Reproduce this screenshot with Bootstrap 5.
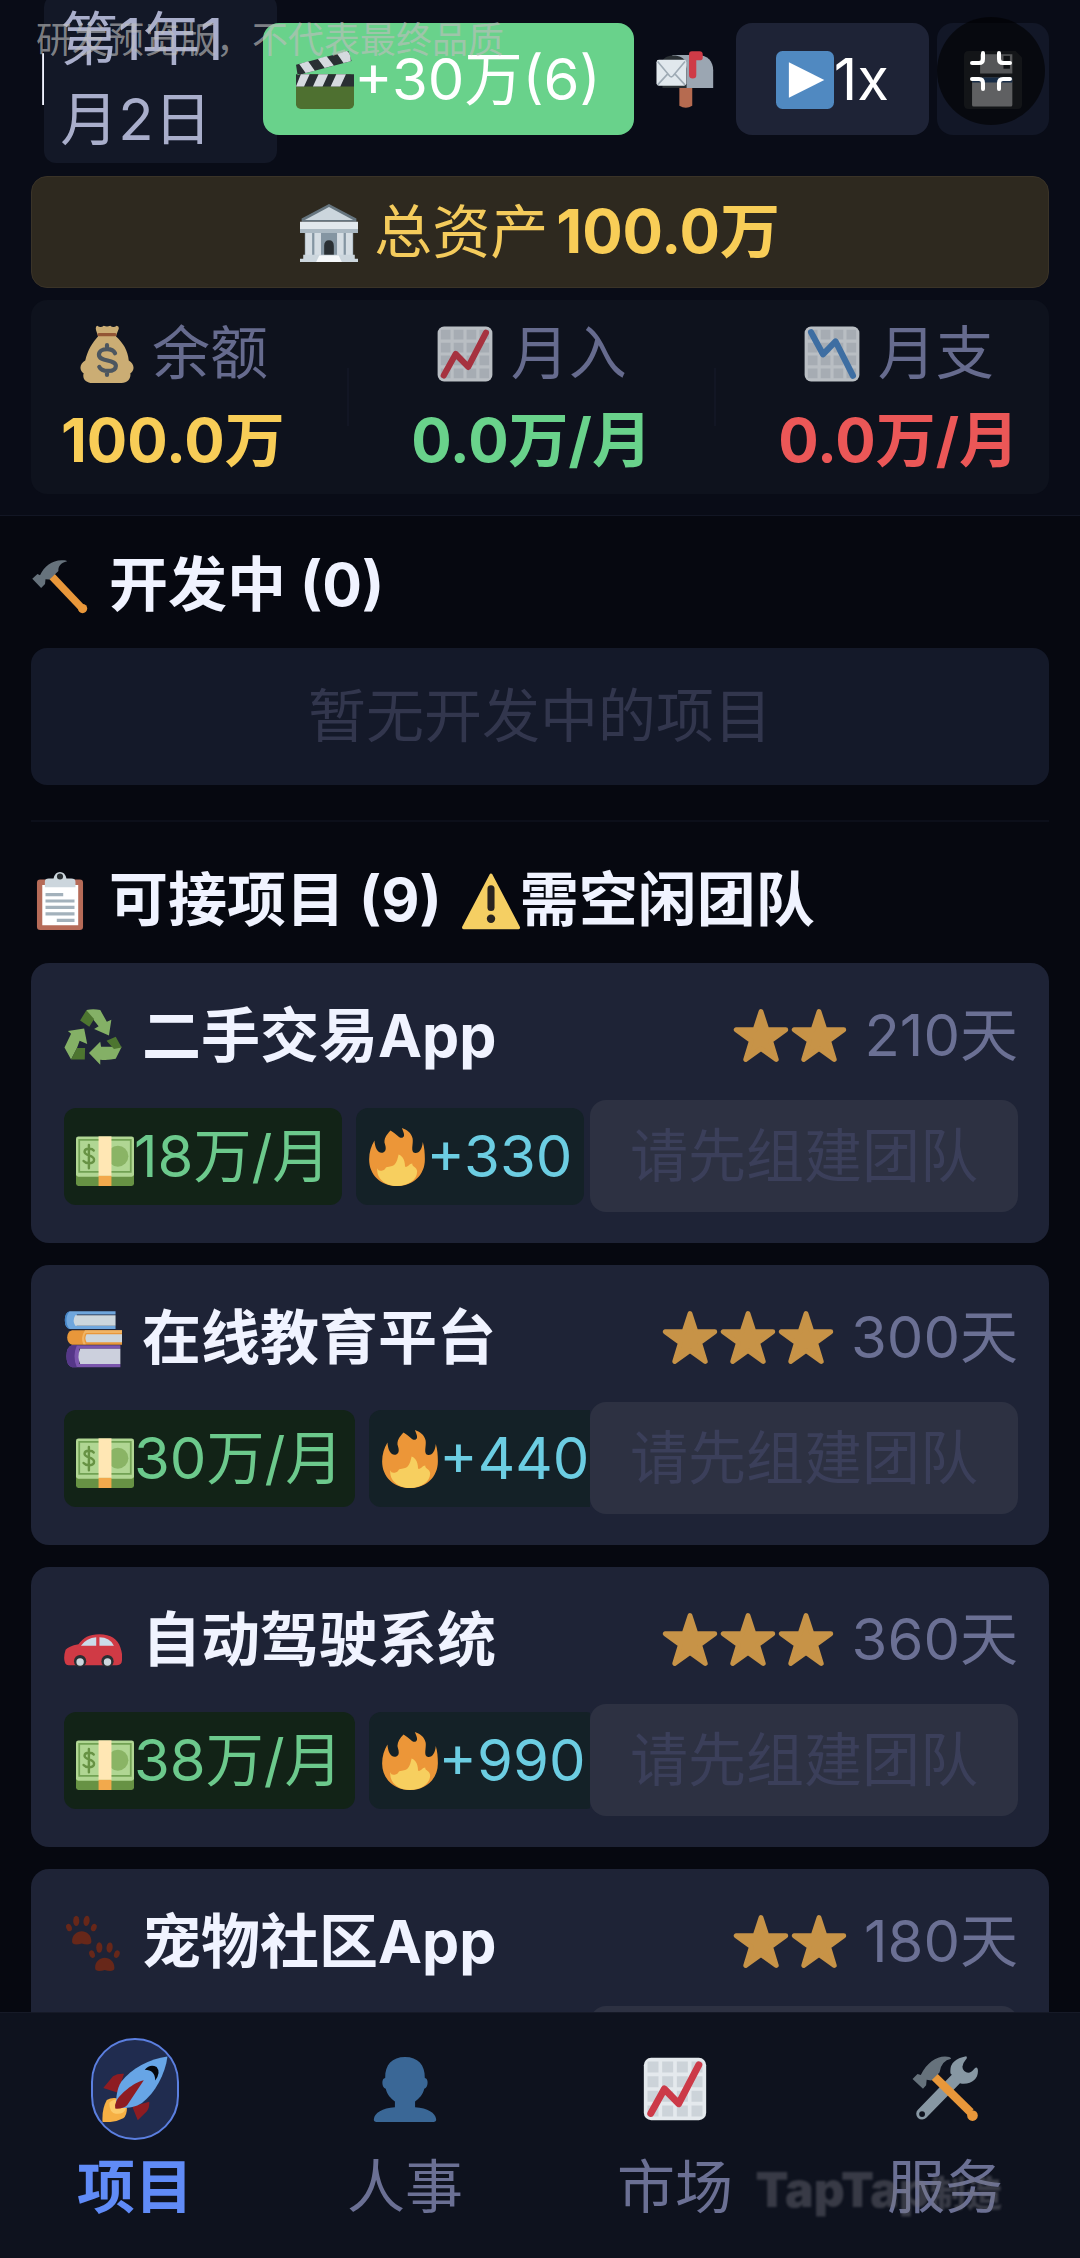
<!DOCTYPE html>
<html lang="zh-CN">
<head>
  <meta charset="UTF-8">
  <title>项目</title>
  <meta name="viewport" content="width=device-width, initial-scale=1">
  <link href="https://cdn.jsdelivr.net/npm/bootstrap@5.3.2/dist/css/bootstrap.min.css" rel="stylesheet">

  <style>
    body {
      background: #060810;
      color: #f0f3ff;
      font-family: Inter, "Noto Sans CJK SC", sans-serif;
      font-size: 58px;
      line-height: 87px;
      white-space: nowrap;
    }

    .emo {
      width: 58px;
      height: 58px;
      vertical-align: -9px;
      flex-shrink: 0;
    }

    /* top area */
    .top-area {
      background: #090c17;
      border-bottom: 1px solid #121624;
      padding: 23px 31px 21px;
    }

    .top-row {
      height: 112px;
      margin-bottom: 41px;
      gap: 8px;
    }

    .top-left {
      min-width: 0;
      margin-right: -22px;
      padding-left: 3px;
    }

    .game-title {
      flex: 1 1 0;
      min-width: 0;
      overflow: hidden;
      font-weight: 700;
    }

    .date-box {
      flex: 0 0 233px;
      padding: 4px 16px;
      border-radius: 12px;
      background: #131827;
      color: #a9aecb;
      line-height: 80px;
      white-space: normal;
    }

    .btn-game {
      --bs-btn-font-size: 58px;
      --bs-btn-line-height: 1.5;
      --bs-btn-border-width: 0;
      --bs-btn-border-radius: 16px;
      --bs-btn-disabled-opacity: 1;
      --bs-btn-padding-y: 0;
      --bs-btn-padding-x: 40px;
      flex-shrink: 0;
      height: 112px;
    }

    .btn-ad {
      --bs-btn-color: #fff;
      --bs-btn-bg: #69d28b;
      --bs-btn-padding-x: 33px;
      z-index: 1;
    }

    .btn-mail {
      --bs-btn-padding-x: 14px;
    }

    .btn-speed {
      --bs-btn-color: #fff;
      --bs-btn-bg: #1e2336;
    }

    .btn-save {
      --bs-btn-bg: #121727;
      --bs-btn-padding-x: 27px;
    }

    .btn-shrink {
      position: absolute;
      top: 17px;
      right: 35px;
      z-index: 3;
      width: 108px;
      height: 108px;
      border: 0;
      border-radius: 50%;
      background: rgba(0, 0, 0, .6);
    }

    .preview-note {
      position: absolute;
      top: 16px;
      left: 36px;
      z-index: 2;
      color: rgba(190, 190, 190, .65);
      font-size: 36px;
      line-height: 48px;
    }

    .asset-bar {
      padding: 11px 0;
      border: 1px solid #3a3327;
      border-radius: 16px;
      background: #2e291f;
      color: #f4cb5c;
    }

    .asset-bar b,
    .stat-value {
      font-size: 60px;
      font-weight: 700;
    }

    .stat-box {
      margin-top: 12px;
      padding: 10px 30px;
      border-radius: 16px;
      background: #0e121d;
    }

    .stat-name {
      color: #666b8e;
    }

    .stat-name .emo {
      opacity: .8;
    }

    .stat-line {
      width: 2px;
      height: 58px;
      background: #121624;
    }

    .c-gold { color: #f8cd57; }
    .c-green { color: #69d28b; }
    .c-red { color: #eb5757; }

    /* list area */
    .list-area {
      min-height: 0;
      overflow: hidden;
      padding: 25px 31px 0;
    }

    .list-head {
      margin: 0 0 20px;
      font-size: 59px;
      font-weight: 700;
      line-height: 87px;
    }

    .list-head .emo:first-child,
    .project-name .emo {
      margin-right: 6px;
    }

    .list-head .emo + .emo {
      margin-left: 6px;
    }

    .empty-box {
      padding: 25px 0;
      border-radius: 16px;
      background: #141929;
      color: #32364d;
    }

    .list-line {
      margin: 35px 0 34px;
      border-top: 2px solid #0c0f1a;
      opacity: 1;
    }

    .project {
      margin-bottom: 22px;
      padding: 29px 31px 31px 33px;
      border-radius: 18px;
      background: #1e2336;
    }

    .project-name {
      margin: 0;
      font-size: 59px;
      font-weight: 700;
      line-height: 87px;
    }

    .project-days {
      color: #6b7094;
    }

    .project-foot {
      height: 112px;
      margin-top: 21px;
    }

    .chips {
      min-width: 0;
      gap: 14px;
      overflow: hidden;
    }

    .chip {
      flex-shrink: 0;
      padding: 5px 12px;
      border-radius: 12px;
      background: #122317;
      color: #6cc98c;
    }

    .chip-hot {
      background: #142127;
      color: #6ccde2;
    }

    .btn-team {
      --bs-btn-disabled-color: #3b3f5a;
      --bs-btn-disabled-bg: #2d3142;
    }

    /* bottom tabs */
    .tabs {
      position: relative;
      padding: 25px 0 28px;
      border-top: 1px solid #161a27;
      background: #0e121e;
    }

    .tab {
      color: #6b7094;
      line-height: 86px;
      text-decoration: none;
    }

    .tab .tab-icon {
      width: 88px;
      height: 102px;
      margin-bottom: 4px;
      border: 2px solid transparent;
      border-radius: 44px;
    }

    .tab .emo {
      width: 66px;
      height: 66px;
    }

    .tab.active {
      color: #608bf7;
      font-weight: 700;
    }

    .tab.active .tab-icon {
      border-color: #5b7fe0;
      background: #202c4f;
    }

    .brand-mark {
      position: absolute;
      right: 78px;
      bottom: 32px;
      color: rgba(120, 120, 130, .4);
      font-size: 48px;
      font-weight: 900;
      line-height: 64px;
      filter: blur(1px);
      pointer-events: none;
    }

    .brand-mark small {
      font-size: 36px;
    }
  </style>
</head>

<body>
  <!-- icons -->
  <svg class="d-none" xmlns="http://www.w3.org/2000/svg">
    <symbol id="clapper" viewBox="0 0 36 36">
      <rect y="14.5" width="36" height="21.500" rx="3" fill="#4e7030"/>
      <path fill="#292f33" d="M0 14.500h36V22H0zM0 8.500 1 15 34.500 6.200 32.500 0Z"/>
      <path fill="#d5dadf" d="M3 14.500h5.500L5 22H0zM14 14.500h6L16.500 22h-6zM25 14.500h6L27.500 22h-6zM2 8.100l5.500-1.700 4.200 5.800-5.700 1.500zM13.500 4.800l5.500-1.500L23.500 9l-5.700 1.500zM25.500 1.700 31.500 0c1.500.5 2.500 3 2.500 6.300l-4.500 1.200z"/>
    </symbol>
    <symbol id="mail" viewBox="0 0 36 36">
      <path fill="#b66b50" d="M14.500 22h8v12q-4 2.500-8 0z"/>
      <path fill="#9ba6b2" d="M10 2.500h16c6 0 9.500 4 9.500 9.500v11h-17z"/>
      <path fill="#292f33" d="M4 6c2-4 11-4.500 14 0l1 5v12H4z"/>
      <rect x=".3" y="5.500" width="18.500" height="16" rx="1.500" fill="#e1e8ed"/>
      <path fill="none" stroke="#9eaab4" stroke-width="1" d="M1 6.500l7.500 9q1 1 2 0l7.500-9M1 21l6-6.500M18 21l-6-6.500"/>
      <path fill="#cf3b47" d="M20.500 2q0-1.800 1.800-1.800H27q2 0 2 2v2q0 1.600-2 1.600h-2V15q0 2-2.200 2t-2.300-2z"/>
    </symbol>
    <symbol id="play" viewBox="0 0 36 36">
      <rect width="36" height="36" rx="4" fill="#5089c1"/>
      <path fill="#fff" d="M8 7v22l22-11z"/>
    </symbol>
    <symbol id="floppy" viewBox="0 0 36 36">
      <path fill="#31363c" d="M3 0h29l4 4v29q0 3-3 3H3q-3 0-3-3V3q0-3 3-3z"/>
      <path fill="#d4d8dc" d="M10 2h20v12H10z"/>
      <path fill="#292f33" d="M24.500 3h4v8h-4z"/>
      <rect x="5" y="16.500" width="25" height="18" rx="1" fill="#eef1f4"/>
      <path fill="#3b6fae" d="M5 16.500h25v3H5z"/>
    </symbol>
    <symbol id="bank" viewBox="0 0 36 36">
      <path fill="#66757f" d="M18 0 35 9v2H1V9z"/>
      <path fill="#ccd6dd" d="M18 1.800 33 10H3z"/>
      <path fill="#e1e8ed" d="M0 11h36v6.500H0z"/>
      <path fill="#aab8c2" d="M0 15.500h36v2.500H0zM3 18h30v15H3z"/>
      <path fill="#8495a2" d="M7.500 18H9v14H7.500zM13 18h10v15H13zM27 18h1.500v14H27z"/>
      <path fill="#d5dde3" d="M3.500 18h4v14h-4zM9 18h4v14H9zM23 18h4v14h-4zM28.500 18h4v14h-4z"/>
      <path fill="#292f33" d="M15 32v-6q0-3.500 3-3.500t3 3.500v6z"/>
      <path fill="#ccd6dd" d="M2 31.500h32V34h2v2H0v-2h2z"/>
      <path fill="#f5f8fa" d="M12 32h12l2 4H10z"/>
    </symbol>
    <symbol id="bag" viewBox="0 0 36 36">
      <path fill="#fbd48a" d="M12 .5q2 1.500 4 0 2 1 4 0 2 1.500 4 0 2.200.6.800 3L23.500 7C28 11 31 16 31.500 22c3.500 2 4 6 1 8 .5 3-1.500 6-5.500 6H9c-4 0-6.500-2.500-5.500-6-3-2-2.500-6 1-8C6 15.500 9 11 12.500 7L11.300 3.500Q10.500 1 12 .5Z"/>
      <path stroke="#b5683c" stroke-width="2" stroke-linecap="round" d="M13 6h10"/>
      <path fill="none" stroke="#5c6770" stroke-width="2.600" stroke-linecap="round" d="M18 12.500v2.500M18 28.500V31M23 17.500c-1-2-3-2.500-5-2.500-3 0-5 1.300-5 3.400 0 4.600 10.500 2.600 10.500 7 0 2-2 3.100-5 3.100-2.500 0-4.500-.8-5.300-2.500"/>
    </symbol>
    <symbol id="grid" viewBox="0 0 36 36">
      <rect x="1" y="1" width="34" height="34" rx="4" fill="#e4e9ed"/>
      <path fill="#ccd3d9" d="M3 3h6v6H3zM11 3h6v6h-6zM19 3h6v6h-6zM27 3h6v6h-6zM3 11h6v6H3zM11 11h6v6h-6zM19 11h6v6h-6zM27 11h6v6h-6zM3 19h6v6H3zM11 19h6v6h-6zM19 19h6v6h-6zM27 19h6v6h-6zM3 27h6v6H3zM11 27h6v6h-6zM19 27h6v6h-6zM27 27h6v6h-6z"/>
    </symbol>
    <symbol id="chart-up" viewBox="0 0 36 36">
      <use href="#grid"/>
      <path fill="none" stroke="#cc3a48" stroke-width="3.800" stroke-linecap="round" stroke-linejoin="round" d="M4.800 31.300 12.200 18l7.800 8L31 4.800"/>
    </symbol>
    <symbol id="chart-down" viewBox="0 0 36 36">
      <use href="#grid"/>
      <path fill="none" stroke="#4a86c4" stroke-width="3.800" stroke-linecap="round" stroke-linejoin="round" d="M5 4.500l7.400 13.700 7.800-8L31 31.500"/>
    </symbol>
    <symbol id="hammer" viewBox="0 0 36 36">
      <path stroke="#e8973a" stroke-width="4.600" d="M11.500 10.500 31 31"/>
      <circle cx="32" cy="32" r="2.900" fill="#e8973a"/>
      <path fill="#66727c" d="M.800 13.500 4 10.500l1.600.8C8 6 13 2 19 2c2.500 0 3.400.3 3.400.7-4 1-5.600 3.300-5.400 6L11.500 14 9 13.800l-.3 3L6.300 19.200Z"/>
    </symbol>
    <symbol id="clipboard" viewBox="0 0 36 36">
      <rect x="3.700" y="4.600" width="28.600" height="31.400" rx="2" fill="#b66b58"/>
      <path fill="#fff" d="M7 8h22.300v25H7z"/>
      <path fill="#ccd6dd" d="M8.600 9.500V6q0-2 2.400-2h3q1-4 4-4t4 4h3q2.600 0 2.600 2v3.500z"/>
      <circle cx="18" cy="2.800" r="1.900" fill="#292f33"/>
      <path stroke="#a3b1bb" stroke-width="2" d="M9 14h11M9 18h18M9 22h18M9 26h18M16 30h11"/>
    </symbol>
    <symbol id="warn" viewBox="0 0 36 36">
      <path fill="#f5cf63" stroke="#f5cf63" stroke-width="2" stroke-linejoin="round" d="M18 2 35 34.500H1z"/>
      <path stroke="#292420" stroke-width="4.400" stroke-linecap="round" d="M18 10.500V22"/>
      <circle cx="18" cy="29" r="2.600" fill="#292420"/>
    </symbol>
    <symbol id="recycle" viewBox="0 0 36 36">
      <path fill="#84b066" d="M14 1.200q4-.8 8.500 0L26.600 8.600l2.800-1.300-1.500 9.700-9.200-4 2.800-1.700L14 2zM12.500 12.700 2.400 14.300l2 1.700-4.100 8.500L4.400 32l3.600-7 1.700-4.600 4.700 2zM15.500 27.900l7-6.900.5 3h12.800l-3.700 7.500q-4 1-9.600.6v3.100z"/>
      <path fill="#4d7530" d="M13.900 1.400 10 7.700l5.700 4 3-4.800zM8 24.900h5.100l-.2 7.100H4.400zM26.400 20.400l5.700-2.600 3.700 6.700-4.800 1z"/>
    </symbol>
    <symbol id="books" viewBox="0 0 36 36">
      <path fill="#6fa6dd" d="M3.500.8H32v2H8v7h24v2H3.500q-3-1-3-5.500t3-5.500z"/>
      <path fill="#4382c4" d="M3.500.8Q1.500 3 1.500 6.300t2 5.500Q.5 11 .5 6.300T3.500.8z"/>
      <path fill="#ccd6dd" d="M7 3.300h25v6.500H7q-2-3 0-6.500z"/>
      <path fill="#e8973a" d="M5 12.500h31v9H5q-3-1-3-4.500t3-4.500z"/>
      <path fill="#ccd6dd" d="M14 15h22v5H14q-1.500-2.500 0-5z"/>
      <path fill="#f0b464" d="M13 12.500h23v1.700H13.500q-2 2.800 0 7H12q-2-4 1-8.700z"/>
      <path fill="#7b56ad" d="M5 21.900h30V24H9.500v9.500H35v2H5q-3.500-1-3.500-6.800T5 21.900z"/>
      <path fill="#553788" d="M5 21.900h3q-3 7 0 13.600H5q-3.500-1-3.500-6.800T5 21.900z"/>
      <path fill="#ccd0dd" d="M10 24h25v9.500H10q-2-4.500 0-9.500z"/>
    </symbol>
    <symbol id="car" viewBox="0 0 36 36">
      <path fill="#d03a45" d="M.5 31q-1-3 .5-7.500 1.500-2.300 8-3.500c3-4 6.500-6.200 13-6.200 7 0 11.500 3.200 13 8.200q1.800 5 .7 9.500-.7 1.500-3 1.500H3q-2 0-2.500-2z"/>
      <path fill="#cbdcea" d="M10.500 21q3.500-5 9.500-5.300V21zM22 15.700q6.500 0 9 5.300h-9z"/>
      <circle cx="10" cy="30.500" r="3.800" fill="#292f33"/>
      <circle cx="27" cy="30.500" r="3.800" fill="#292f33"/>
      <circle cx="10" cy="31" r="2.300" fill="#ccd6dd"/>
      <circle cx="27" cy="31" r="2.300" fill="#ccd6dd"/>
    </symbol>
    <symbol id="paws" viewBox="0 0 36 36">
      <g id="paw" fill="#672719">
        <path d="M5 17c0-4 3-6.300 6-6.300s6 2.300 6 6.300c0 2.500-3.500 2-6 1.300-2.500.7-6 1.200-6-1.300z"/>
        <ellipse cx="3.100" cy="8.400" rx="1.700" ry="2.400" transform="rotate(-20 3.100 8.400)"/>
        <ellipse cx="7.600" cy="4.300" rx="1.900" ry="3.200"/>
        <ellipse cx="14" cy="4.300" rx="1.900" ry="3.200" transform="rotate(8 14 4.300)"/>
        <ellipse cx="18.500" cy="8.400" rx="1.700" ry="2.400" transform="rotate(20 18.500 8.400)"/>
      </g>
      <use href="#paw" x="14.300" y="16.500"/>
    </symbol>
    <symbol id="star" viewBox="0 0 36 36">
      <path fill="#c79347" stroke="#c79347" stroke-width="3" stroke-linejoin="round" d="M18 2.800l3.700 11.300h11.700L24 21l3.500 11.600L18 25.800l-9.500 6.800L12 21 2.600 14.100h11.700z"/>
    </symbol>
    <symbol id="cash" viewBox="0 0 36 36">
      <rect y="22" width="36" height="14" rx="1.500" fill="#679244"/>
      <rect y="5.200" width="36" height="25" rx="1.500" fill="#b0d693"/>
      <path fill="none" stroke="#72a254" stroke-width="1.100" d="M2 7.300h32v20H2z"/>
      <circle cx="26" cy="17.500" r="6.500" fill="#8ab465"/>
      <path fill="none" stroke="#679244" stroke-width="1.500" stroke-linecap="round" d="M8 10.500v14.500M11 14c-1-1.400-5.500-1.700-5.700.7-.2 2.700 5.900 2 5.900 5 0 2.800-5 2.700-6.500.8"/>
      <path fill="#ffe7b4" d="M14 5.200h8v24.500h-8z"/>
      <path fill="#f2a94c" d="M14 29.700h8V36h-8z"/>
    </symbol>
    <symbol id="fire" viewBox="0 0 36 36">
      <path fill="#ec9638" d="M4 7.700C2 11 .7 15 .7 19.500.7 29 8 36 18 36s17.300-7 17.300-16.500c0-4-.3-7.500-1.300-10.800-.3 4-2 7-4.700 6.800-3.300-.4-1-5.500-1.600-9C27 3 24 1 21 0c.8 2 2.500 5.300.3 6-2.300.4-3-2-7.300-4.500C11.500 4 9.500 7 10.500 10c.8 2.500.8 4.500-1 5.200-3.500 1-5.200-3.200-5.500-7.500Z"/>
      <path fill="#f7cf5f" d="M5.800 25q.5 2 2.700 1.500c3-.5 1.500-2.500 4.500-2.500 4 0 5-3 6-7.500 3 1 4 4.500 4 7.500 2 .5 2.500-2 4.500-2-.5 2 3 2 3 5 0 5-5.500 9-12.500 9S5 31.500 5.800 25Z"/>
    </symbol>
    <symbol id="rocket" viewBox="0 0 36 36">
      <path fill="#8e1c22" d="M12 9.700Q8.500 9.500 6 11L.7 17.500l8 2.500zM25.800 25q.2 3-1.300 5.200L19.500 35l-3-7.500z"/>
      <path fill="#f6b044" d="M.3 36q-.5-7 2.300-12Q5 22.500 8 23l5.600 5.300q0 4-2 5.700Q7 36.500.3 36z"/>
      <path fill="#fccb6a" d="M4 25.500q3-2.500 5-1.500l4 4.500q-1 3.500-5.500 3Q4 31 4 25.500z"/>
      <path fill="#67a5e6" d="M35.700.3C26 1.500 16 7 10.500 14 8 18 7.500 23 7.800 28.300c5 .3 10 0 14-2.600C29 20 34.500 10 35.700.3Z"/>
      <path fill="#8e1c22" d="M22.800 13.200C17 14.500 9.500 21 7.800 24.700q-1 2-.6 4 4.300.3 6.600-2z"/>
      <path fill="#05070c" d="M23.300 7.500q3-3.500 6.500-1.500 2.500 3-.8 7.300Q29 7.500 23.300 7.500z"/>
    </symbol>
    <symbol id="person" viewBox="0 0 36 36">
      <path fill="#3a6796" d="M18 .5c7 0 11 4.200 10.800 11.500 2.200 0 2 5.500-.3 5.800-.7 3.200-2.700 5.200-5 7V28c7 .5 11 3 11.500 6.500.1 1-.5 1.500-1.500 1.500H2.500c-1 0-1.600-.5-1.500-1.500C1.500 31 5.500 28.500 12.500 28v-3.200c-2.300-1.800-4.300-3.800-5-7-2.300-.3-2.500-5.800-.3-5.800C7 4.700 11 .5 18 .5Z"/>
    </symbol>
    <symbol id="tools" viewBox="0 0 36 36">
      <path stroke="#8797a3" stroke-width="6.400" stroke-linecap="round" d="M5.500 31.500 24 12.500"/>
      <circle cx="5.500" cy="31.700" r="1.600" fill="#0e121e"/>
      <path fill="#8797a3" d="M29.500.2q1 .7-.3 2-3 3.500-.7 6 2.700 2.300 5.500-1.200 1.500-1.500 1.900.3C36.500 12 33 15.800 26.500 15L21 9.500Q20 2 29.500.2Z"/>
      <path stroke="#e8973a" stroke-width="4.600" d="M12 11l20 19.700"/>
      <circle cx="33" cy="32.500" r="2.900" fill="#e8973a"/>
      <path fill="#66727c" d="M.3 12.500 3 9.800l1.800.5C8 4 13 .3 18 .3q3 0 3.400 1.200-5.500 1-6.400 7.500L10.500 13.300 8 13l-.3 3L6 17.800Z"/>
    </symbol>
  </svg>

  <div class="vh-100 d-flex flex-column position-relative overflow-hidden">
    <header class="top-area">
      <div class="top-row d-flex align-items-center">
        <div class="top-left d-flex align-items-center flex-fill">
          <div class="game-title">目</div>
          <div class="date-box">第1年1月2日</div>
        </div>
        <button class="btn btn-game btn-ad" type="button"><svg class="emo"><use href="#clapper"/></svg>+30万(6)</button>
        <button class="btn btn-game btn-mail" type="button" aria-label="邮件"><svg class="emo"><use href="#mail"/></svg></button>
        <button class="btn btn-game btn-speed" type="button"><svg class="emo"><use href="#play"/></svg>1x</button>
        <button class="btn btn-game btn-save" type="button" aria-label="存档"><svg class="emo"><use href="#floppy"/></svg></button>
      </div>

      <div class="asset-bar text-center">
        <svg class="emo"><use href="#bank"/></svg>
        总资产<b class="c-gold ms-2">100.0万</b>
      </div>

      <div class="stat-box d-flex justify-content-between align-items-center">
        <div class="text-center">
          <div class="stat-name"><svg class="emo"><use href="#bag"/></svg> 余额</div>
          <div class="stat-value c-gold">100.0万</div>
        </div>
        <div class="stat-line"></div>
        <div class="text-center">
          <div class="stat-name"><svg class="emo"><use href="#chart-up"/></svg> 月入</div>
          <div class="stat-value c-green">0.0万/月</div>
        </div>
        <div class="stat-line"></div>
        <div class="text-center">
          <div class="stat-name"><svg class="emo"><use href="#chart-down"/></svg> 月支</div>
          <div class="stat-value c-red">0.0万/月</div>
        </div>
      </div>
    </header>

    <main class="list-area flex-fill">
      <h2 class="list-head"><svg class="emo"><use href="#hammer"/></svg> 开发中 (0)</h2>
      <div class="empty-box text-center">暂无开发中的项目</div>

      <hr class="list-line">

      <h2 class="list-head"><svg class="emo"><use href="#clipboard"/></svg> 可接项目 (9) <svg class="emo"><use href="#warn"/></svg>需空闲团队</h2>

      <div class="project">
        <div class="d-flex justify-content-between">
          <h3 class="project-name"><svg class="emo"><use href="#recycle"/></svg> 二手交易App</h3>
          <div class="project-days"><svg class="emo"><use href="#star"/></svg><svg class="emo"><use href="#star"/></svg> 210天</div>
        </div>
        <div class="project-foot d-flex justify-content-between align-items-center">
          <div class="chips d-flex">
            <div class="chip"><svg class="emo"><use href="#cash"/></svg>18万/月</div>
            <div class="chip chip-hot"><svg class="emo"><use href="#fire"/></svg>+330</div>
          </div>
          <button class="btn btn-game btn-team" type="button" disabled>请先组建团队</button>
        </div>
      </div>

      <div class="project">
        <div class="d-flex justify-content-between">
          <h3 class="project-name"><svg class="emo"><use href="#books"/></svg> 在线教育平台</h3>
          <div class="project-days"><svg class="emo"><use href="#star"/></svg><svg class="emo"><use href="#star"/></svg><svg class="emo"><use href="#star"/></svg> 300天</div>
        </div>
        <div class="project-foot d-flex justify-content-between align-items-center">
          <div class="chips d-flex">
            <div class="chip"><svg class="emo"><use href="#cash"/></svg>30万/月</div>
            <div class="chip chip-hot"><svg class="emo"><use href="#fire"/></svg>+440</div>
          </div>
          <button class="btn btn-game btn-team" type="button" disabled>请先组建团队</button>
        </div>
      </div>

      <div class="project">
        <div class="d-flex justify-content-between">
          <h3 class="project-name"><svg class="emo"><use href="#car"/></svg> 自动驾驶系统</h3>
          <div class="project-days"><svg class="emo"><use href="#star"/></svg><svg class="emo"><use href="#star"/></svg><svg class="emo"><use href="#star"/></svg> 360天</div>
        </div>
        <div class="project-foot d-flex justify-content-between align-items-center">
          <div class="chips d-flex">
            <div class="chip"><svg class="emo"><use href="#cash"/></svg>38万/月</div>
            <div class="chip chip-hot"><svg class="emo"><use href="#fire"/></svg>+990</div>
          </div>
          <button class="btn btn-game btn-team" type="button" disabled>请先组建团队</button>
        </div>
      </div>

      <div class="project">
        <div class="d-flex justify-content-between">
          <h3 class="project-name"><svg class="emo"><use href="#paws"/></svg> 宠物社区App</h3>
          <div class="project-days"><svg class="emo"><use href="#star"/></svg><svg class="emo"><use href="#star"/></svg> 180天</div>
        </div>
        <div class="project-foot d-flex justify-content-end align-items-center">
          <button class="btn btn-game btn-team" type="button" disabled>请先组建团队</button>
        </div>
      </div>
    </main>

    <nav class="tabs">
      <div class="row g-0 text-center">
        <a class="tab col active" href="#"><div class="tab-icon d-flex align-items-center justify-content-center mx-auto"><svg class="emo"><use href="#rocket"/></svg></div>项目</a>
        <a class="tab col" href="#"><div class="tab-icon d-flex align-items-center justify-content-center mx-auto"><svg class="emo"><use href="#person"/></svg></div>人事</a>
        <a class="tab col" href="#"><div class="tab-icon d-flex align-items-center justify-content-center mx-auto"><svg class="emo"><use href="#chart-up"/></svg></div>市场</a>
        <a class="tab col" href="#"><div class="tab-icon d-flex align-items-center justify-content-center mx-auto"><svg class="emo"><use href="#tools"/></svg></div>服务</a>
      </div>
      <div class="brand-mark">TapTap<small>制造</small></div>
    </nav>

    <div class="preview-note">研发预览版，不代表最终品质</div>
    <button class="btn-shrink p-0 d-flex align-items-center justify-content-center" type="button" aria-label="退出全屏">
      <svg width="44" height="44" viewBox="0 0 44 44" fill="none" stroke="#fff" stroke-width="4" stroke-linecap="round">
        <path d="M3 14h7q4 0 4-4V4M41 14h-7q-4 0-4-4V4M3 30h7q4 0 4 4v6M41 30h-7q-4 0-4 4v6"/>
      </svg>
    </button>
  </div>

  <script src="https://cdn.jsdelivr.net/npm/bootstrap@5.3.2/dist/js/bootstrap.bundle.min.js"></script>
</body>
</html>
